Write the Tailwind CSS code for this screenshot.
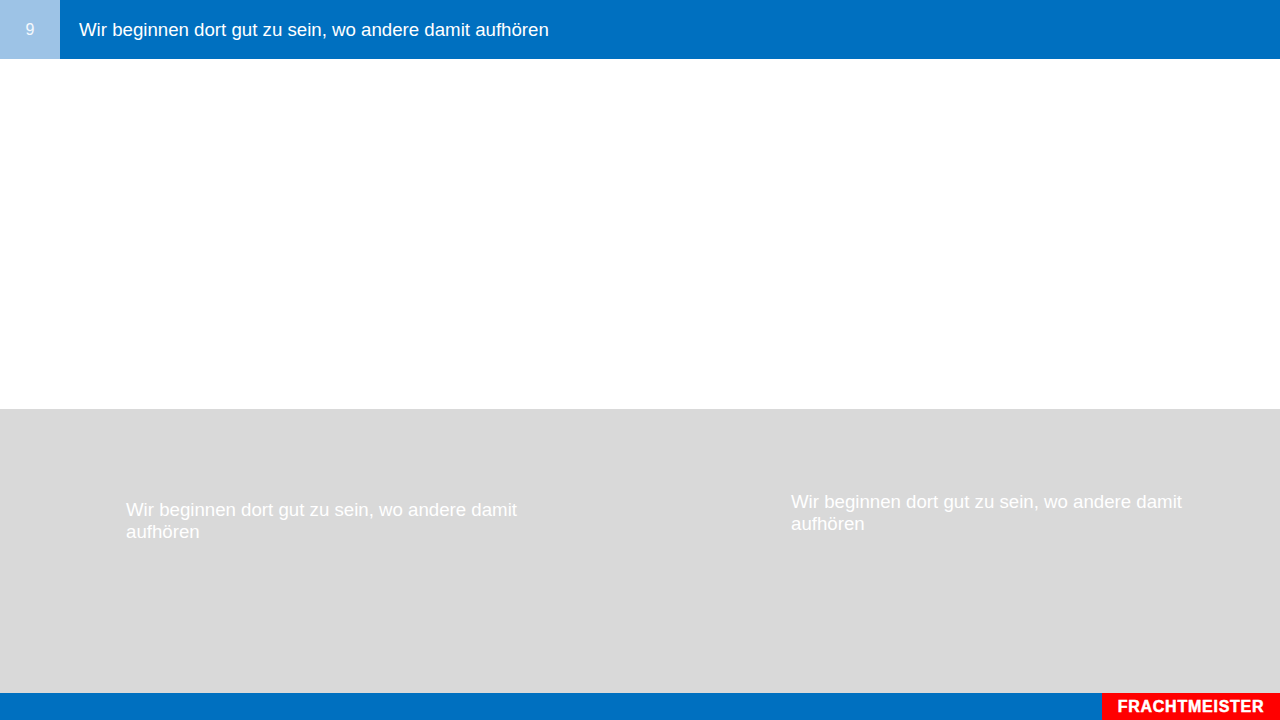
<!DOCTYPE html>
<html lang="de">
  <head>
    <meta charset="UTF-8" />
    <meta name="viewport" content="width=device-width, initial-scale=1.0" />
    <title>Frachtmeister</title>
    <script src="https://cdn.jsdelivr.net/npm/@tailwindcss/browser@4"></script>
  </head>
  <body class="bg-white font-['Liberation_Sans',Arial,sans-serif] overflow-hidden">
    <div class="flex flex-col w-[1280px] h-[720px]">
      <!-- Header -->
      <header class="flex items-center h-[59px] bg-[#0070c0] text-white">
        <div class="flex items-center justify-center w-[60px] h-full bg-[#9dc3e6] text-[16px] text-white/90">9</div>
        <h1 class="pl-[19px] text-[18.67px] leading-[22px]">Wir beginnen dort gut zu sein, wo andere damit aufhören</h1>
      </header>

      <!-- Empty area -->
      <main class="h-[350px] bg-white"></main>

      <!-- Grey section -->
      <section class="flex h-[284px] bg-[#d9d9d9] text-white text-[18.67px] leading-[22px]">
        <div class="w-[791px] pl-[126px] pt-[90px]">
          <p class="w-[420px]">Wir beginnen dort gut zu sein, wo andere damit aufhören</p>
        </div>
        <div class="pt-[82px]">
          <p class="w-[420px]">Wir beginnen dort gut zu sein, wo andere damit aufhören</p>
        </div>
      </section>

      <!-- Footer -->
      <footer class="flex justify-end h-[27px] bg-[#0070c0]">
        <div class="flex items-center justify-center w-[178px] bg-[#ff0000] text-white text-[16px] tracking-[0.75px] font-bold [-webkit-text-stroke:0.5px_white]">FRACHTMEISTER</div>
      </footer>
    </div>
  </body>
</html>
